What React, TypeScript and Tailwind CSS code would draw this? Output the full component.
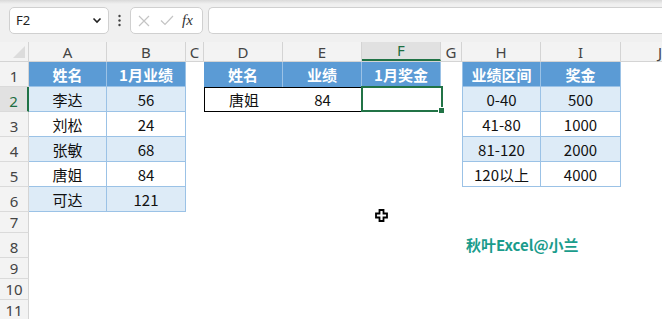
import React from "react";

const colNames = ["A", "B", "C", "D", "E", "F", "G", "H", "I", "J"];
const rowHeights = ["h-[25px]", "h-[25px]", "h-[25px]", "h-[25px]", "h-[25px]", "h-[25px]", "h-[21px]", "h-[25px]", "h-[21px]", "h-[21px]", "h-[21px]"];
const colW = ["w-[29px]", "w-[78px]", "w-[79px]", "w-[18px]", "w-[79px]", "w-[79px]", "w-[79px]", "w-[21px]", "w-[79px]", "w-[80px]", "w-[79px]"];

type Cell = { text?: string; cls: string; sel?: boolean; wm?: boolean };

const HEAD = "bg-[#5b9bd5] text-white font-bold border-r border-b border-[#9bc2e6]";
const LIGHT = "bg-[#ddebf7] text-[#111] border-r border-b border-[#9bc2e6]";
const WHITE = "bg-white text-[#111] border-r border-b border-[#9bc2e6]";

const t1 = [
  ["姓名", "1月业绩"],
  ["李达", "56"],
  ["刘松", "24"],
  ["张敏", "68"],
  ["唐姐", "84"],
  ["可达", "121"],
];
const t3 = [
  ["业绩区间", "奖金"],
  ["0-40", "500"],
  ["41-80", "1000"],
  ["81-120", "2000"],
  ["120以上", "4000"],
];

function getCell(r: number, c: number): Cell {
  if (c <= 1 && r <= 5) {
    const cls = r === 0 ? HEAD : r % 2 === 1 ? LIGHT : WHITE;
    return { text: t1[r][c], cls };
  }
  if (c >= 7 && c <= 8 && r <= 4) {
    let cls = r === 0 ? HEAD : r % 2 === 1 ? LIGHT : WHITE;
    if (c === 7) cls += " border-l";
    return { text: t3[r][c - 7], cls };
  }
  if (c >= 3 && c <= 5 && r === 0) {
    const texts = ["姓名", "业绩", "1月奖金"];
    const cls = "bg-[#5b9bd5] text-white font-bold border-r border-[#9bc2e6]";
    return { text: texts[c - 3], cls };
  }
  if (c >= 3 && c <= 4 && r === 1) {
    let cls = "bg-white text-[#111] border-t border-b border-black";
    if (c === 3) cls += " border-l";
    return { text: c === 3 ? "唐姐" : "84", cls };
  }
  if (c === 5 && r === 1) {
    return { text: "", cls: "bg-white border-t border-b border-black", sel: true };
  }
  if (c === 7 && r === 7) {
    return { text: "秋叶Excel@小兰", cls: "bg-white", wm: true };
  }
  return { cls: "bg-white" };
}

function Cursor() {
  return (
    <svg className="absolute left-[375px] top-[209px]" width="13" height="13" viewBox="0 0 13 13">
      <path
        d="M4.5 1 H8.5 V4.5 H12 V8.5 H8.5 V12 H4.5 V8.5 H1 V4.5 H4.5 Z"
        fill="white"
        stroke="black"
        strokeWidth="1.8"
        strokeLinejoin="miter"
      />
    </svg>
  );
}

export default function App() {
  const font = { fontFamily: '"Noto Sans CJK SC", "Noto Sans", sans-serif' };
  const hdrFont = { fontFamily: '"Noto Sans", sans-serif' };
  return (
    <div className="relative w-[662px] h-[319px] overflow-hidden bg-white select-none" style={font}>
      {/* Toolbar / formula bar */}
      <div className="h-[42px] bg-[#f0f0f0] relative">
        <div className="absolute inset-x-0 top-0 h-[4px] bg-gradient-to-b from-[#d9d9d9] to-[#f0f0f0]" />
        <div className="flex items-start pt-[7px] pl-[9px]">
          <div className="w-[100px] h-[27px] bg-white border border-[#d0d0d0] rounded-[5px] flex items-center justify-between pl-[6px] pr-[6px]">
            <span className="text-[13px] text-[#222]" style={hdrFont}>F2</span>
            <svg width="10" height="7" viewBox="0 0 10 7">
              <path d="M1.5 1.5 L5 5 L8.5 1.5" fill="none" stroke="#222" strokeWidth="1.6" />
            </svg>
          </div>
          <div className="w-[21px] h-[27px] flex items-center justify-center">
            <svg width="3" height="13" viewBox="0 0 3 13">
              <circle cx="1.5" cy="2" r="1.2" fill="#444" />
              <circle cx="1.5" cy="6.5" r="1.2" fill="#444" />
              <circle cx="1.5" cy="11" r="1.2" fill="#444" />
            </svg>
          </div>
          <div className="w-[73px] h-[27px] bg-white border border-[#d0d0d0] rounded-[5px] flex items-center pl-[7px] gap-[10px]">
            <svg width="12" height="12" viewBox="0 0 12 12">
              <path d="M1 1 L11 11 M11 1 L1 11" stroke="#c4c4c4" strokeWidth="1.2" />
            </svg>
            <svg width="14" height="11" viewBox="0 0 14 11">
              <path d="M1 5.5 L5 9.5 L13 1" fill="none" stroke="#c4c4c4" strokeWidth="1.2" />
            </svg>
            <span className="italic text-[15px] text-[#333] leading-none -ml-[2px]" style={{ fontFamily: '"Liberation Serif", serif' }}>fx</span>
          </div>
          <div className="ml-[5px] flex-1 h-[27px] bg-white border border-[#d0d0d0] rounded-l-[5px] border-r-0" />
        </div>
      </div>

      {/* Column header */}
      <div className="flex h-[20px] bg-[#f3f3f3] border-b border-[#d4d4d4]" style={hdrFont}>
        <div className={`${colW[0]} shrink-0 h-full relative border-r border-[#d4d4d4]`}>
          <div className="absolute right-[3px] bottom-[3px] w-0 h-0 border-l-[12px] border-l-transparent border-b-[12px] border-b-[#dcdcdc]" />
        </div>
        {colNames.map((n, i) => {
          const isSel = n === "F";
          return (
            <div
              key={n}
              className={`${colW[i + 1]} h-full shrink-0 flex items-end justify-center text-[15px] leading-[18px] border-r border-[#d4d4d4] ${
                isSel ? "bg-[#e1e1e1] text-[#1e6e42] border-b-2 border-b-[#217346]" : "text-[#444]"
              }`}
            >
              {n}
            </div>
          );
        })}
      </div>

      {/* Rows */}
      {rowHeights.map((h, r) => (
        <div key={r} className={`flex ${h}`}>
          <div
            className={`${colW[0]} shrink-0 h-full flex items-end justify-center text-[15px] leading-[20px] border-b border-[#dadada] ${
              r === 1
                ? "bg-[#e1e1e1] text-[#1e6e42] border-r-2 border-r-[#217346]"
                : "bg-[#f3f3f3] text-[#444] border-r border-r-[#d4d4d4]"
            }`}
            style={hdrFont}
          >
            {r + 1}
          </div>
          {colNames.map((_, c) => {
            const cell = getCell(r, c);
            return (
              <div
                key={c}
                className={`${colW[c + 1]} shrink-0 h-full relative flex items-center ${
                  cell.wm ? "justify-start" : "justify-center"
                } text-[15px] ${cell.cls}`}
              >
                {cell.wm ? (
                  <span className="whitespace-nowrap pl-[4px] font-bold text-[#1a9c8c] text-[15px] relative z-10">
                    {cell.text}
                  </span>
                ) : (
                  <span className="leading-none">{cell.text}</span>
                )}
                {cell.sel && (
                  <div className="absolute -left-[1px] -top-[2px] -right-[2px] -bottom-[1px] border-2 border-[#217346] z-10">
                    <div className="absolute -right-[4px] -bottom-[4px] w-[7px] h-[7px] bg-[#217346] border border-white" />
                  </div>
                )}
              </div>
            );
          })}
        </div>
      ))}

      <Cursor />
    </div>
  );
}
